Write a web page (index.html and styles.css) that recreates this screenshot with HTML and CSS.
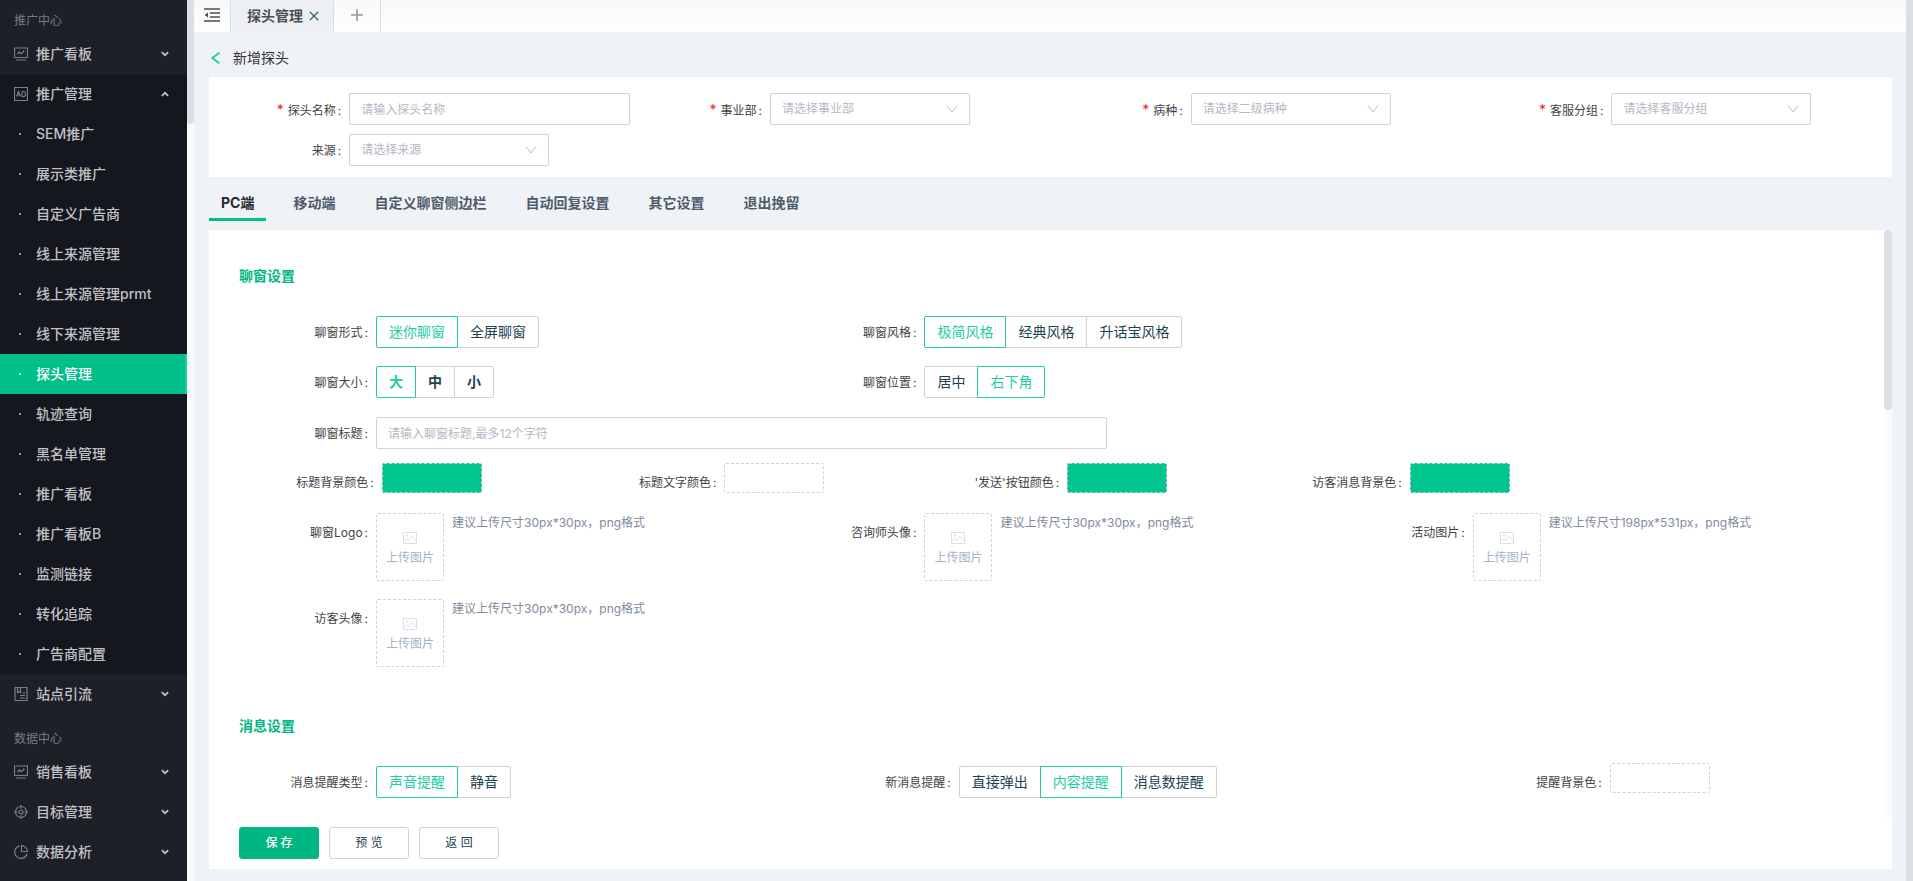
FILE: index.html
```html
<!DOCTYPE html>
<html lang="zh-CN">
<head>
<meta charset="utf-8">
<title>探头管理</title>
<link rel="stylesheet" href="styles.css">
</head>
<body>
<svg class="defs" aria-hidden="true">
  <symbol id="i-board" viewBox="0 0 14 14"><path d="M.5 1h13v9.5H.5zM2 13h10M3.5 7l2-2 1.5 1.7L10.500 4M9 4h1.500" /></symbol>
  <symbol id="i-ad" viewBox="0 0 14 14"><path d="M.5.5h13v13H.5zM2.500 9.500l2-5 2 5M3.200 8h2.600M8 4.500v5M8 4.500h1.200a2.500 2.500 0 0 1 0 5H8" /></symbol>
  <symbol id="i-site" viewBox="0 0 14 14"><path d="M1 .5h12v13H1zM3.500.5v5l1.500-1 1.500 1v-5M6 8.500h5M6 11h5M8.500 6h2.500" /></symbol>
  <symbol id="i-target" viewBox="0 0 14 14"><circle cx="7" cy="7" r="5.500"/><circle cx="7" cy="7" r="2"/><path d="M7 0v3.500M7 10.500V14M0 7h3.500M10.500 7H14" /></symbol>
  <symbol id="i-pie" viewBox="0 0 14 14"><path d="M5.500.9A6.300 6.300 0 1 0 13 9M7.500.6V6.500h5.900A6 6 0 0 0 7.500.6z" /></symbol>
  <symbol id="i-down" viewBox="0 0 8 6"><path d="M.8 1.200 4 4.200 7.200 1.200" /></symbol>
  <symbol id="i-up" viewBox="0 0 8 6"><path d="M.8 4.800 4 1.800 7.200 4.800" /></symbol>
  <symbol id="i-select" viewBox="0 0 12 12"><path d="M1 2.500 6 9l5-6.500" /></symbol>
  <symbol id="i-image" viewBox="0 0 14 12"><path d="M.5.5h13v11H.5zM1 9.500l3-3 1.500 2L9 4.500l4 4.500" /><circle cx="4" cy="3.500" r=".8"/></symbol>
</svg>
<div class="app">
  <nav class="sidebar">
    <div class="group-title first">推广中心</div>
    <a class="item" href="#"><svg class="icon"><use href="#i-board"/></svg>推广看板<svg class="arrow"><use href="#i-down"/></svg></a>
    <div class="opened">
      <a class="item" href="#"><svg class="icon"><use href="#i-ad"/></svg>推广管理<svg class="arrow"><use href="#i-up"/></svg></a>
      <a class="item sub" href="#">SEM推广</a>
      <a class="item sub" href="#">展示类推广</a>
      <a class="item sub" href="#">自定义广告商</a>
      <a class="item sub" href="#">线上来源管理</a>
      <a class="item sub" href="#">线上来源管理prmt</a>
      <a class="item sub" href="#">线下来源管理</a>
      <a class="item sub active" href="#">探头管理</a>
      <a class="item sub" href="#">轨迹查询</a>
      <a class="item sub" href="#">黑名单管理</a>
      <a class="item sub" href="#">推广看板</a>
      <a class="item sub" href="#">推广看板B</a>
      <a class="item sub" href="#">监测链接</a>
      <a class="item sub" href="#">转化追踪</a>
      <a class="item sub" href="#">广告商配置</a>
    </div>
    <a class="item" href="#"><svg class="icon"><use href="#i-site"/></svg>站点引流<svg class="arrow"><use href="#i-down"/></svg></a>
    <div class="group-title">数据中心</div>
    <a class="item" href="#"><svg class="icon"><use href="#i-board"/></svg>销售看板<svg class="arrow"><use href="#i-down"/></svg></a>
    <a class="item" href="#"><svg class="icon"><use href="#i-target"/></svg>目标管理<svg class="arrow"><use href="#i-down"/></svg></a>
    <a class="item" href="#"><svg class="icon"><use href="#i-pie"/></svg>数据分析<svg class="arrow"><use href="#i-down"/></svg></a>
  </nav>
  <div class="side-scroll"><div class="side-thumb"></div></div>

  <main class="main">
    <header class="topbar">
      <button class="fold" type="button" aria-label="收起菜单"><svg width="16" height="14" viewBox="0 0 16 14"><path d="M0 1h16M6 5h10M6 9h10M0 13h16" fill="none" stroke="#4a4f55" stroke-width="1.300"/><path d="M4 4.500v5L.5 7z" fill="#4a4f55"/></svg></button>
      <div class="page-tab">探头管理<button type="button" aria-label="关闭"><svg width="10" height="10" viewBox="0 0 10 10"><path d="M.8.8l8.400 8.400M9.200.8.8 9.200" fill="none" stroke="#3d6472" stroke-width="1.300"/></svg></button></div>
      <button class="add" type="button" aria-label="新增标签"><svg width="12" height="12" viewBox="0 0 12 12"><path d="M6 0v12M0 6h12" fill="none" stroke="#8c9bab" stroke-width="1.600"/></svg></button>
    </header>

    <div class="crumb">
      <button type="button" aria-label="返回上一页"><svg width="10" height="12" viewBox="0 0 10 12"><path d="M8.500.8 1.200 6l7.300 5.200" fill="none" stroke="#1fcca3" stroke-width="1.700"/></svg></button>
      <h1>新增探头</h1>
    </div>

    <form class="body">
      <section class="card base">
        <div class="field"><label class="req" for="f1">探头名称</label><input id="f1" class="text" type="text" placeholder="请输入探头名称"></div>
        <div class="field"><label class="req" for="f2">事业部</label><span class="select"><select id="f2"><option>请选择事业部</option></select><svg><use href="#i-select"/></svg></span></div>
        <div class="field"><label class="req" for="f3">病种</label><span class="select"><select id="f3"><option>请选择二级病种</option></select><svg><use href="#i-select"/></svg></span></div>
        <div class="field"><label class="req" for="f4">客服分组</label><span class="select"><select id="f4"><option>请选择客服分组</option></select><svg><use href="#i-select"/></svg></span></div>
        <div class="field"><label for="f5">来源</label><span class="select"><select id="f5"><option>请选择来源</option></select><svg><use href="#i-select"/></svg></span></div>
      </section>

      <div class="tabs" role="tablist">
        <button class="tab on" type="button" role="tab" aria-selected="true">PC端</button>
        <button class="tab" type="button" role="tab">移动端</button>
        <button class="tab" type="button" role="tab">自定义聊窗侧边栏</button>
        <button class="tab" type="button" role="tab">自动回复设置</button>
        <button class="tab" type="button" role="tab">其它设置</button>
        <button class="tab" type="button" role="tab">退出挽留</button>
      </div>

      <section class="card detail">
        <div class="scroller">
          <div class="content">
            <h2>聊窗设置</h2>
            <div class="row three">
              <div class="field"><span class="label" id="l1">聊窗形式</span><div class="radios" role="radiogroup" aria-labelledby="l1">
                <label><input type="radio" name="form" checked>迷你聊窗</label><label><input type="radio" name="form">全屏聊窗</label></div></div>
              <div class="field"><span class="label" id="l2">聊窗风格</span><div class="radios" role="radiogroup" aria-labelledby="l2">
                <label><input type="radio" name="style" checked>极简风格</label><label><input type="radio" name="style">经典风格</label><label><input type="radio" name="style">升话宝风格</label></div></div>
            </div>
            <div class="row three">
              <div class="field"><span class="label" id="l3">聊窗大小</span><div class="radios strong" role="radiogroup" aria-labelledby="l3">
                <label><input type="radio" name="size" checked>大</label><label><input type="radio" name="size">中</label><label><input type="radio" name="size">小</label></div></div>
              <div class="field"><span class="label" id="l4">聊窗位置</span><div class="radios" role="radiogroup" aria-labelledby="l4">
                <label><input type="radio" name="pos">居中</label><label><input type="radio" name="pos" checked>右下角</label></div></div>
            </div>
            <div class="row title-row">
              <div class="field"><label for="f6">聊窗标题</label><input id="f6" class="text" type="text" placeholder="请输入聊窗标题,最多12个字符"></div>
            </div>
            <div class="row colors">
              <div class="field"><span class="label">标题背景颜色</span><button class="swatch green" type="button" aria-label="标题背景颜色"></button></div>
              <div class="field"><span class="label">标题文字颜色</span><button class="swatch" type="button" aria-label="标题文字颜色"></button></div>
              <div class="field"><span class="label">'发送'按钮颜色</span><button class="swatch green" type="button" aria-label="发送按钮颜色"></button></div>
              <div class="field"><span class="label">访客消息背景色</span><button class="swatch green" type="button" aria-label="访客消息背景色"></button></div>
            </div>
            <div class="row three uploads">
              <div class="field"><span class="label">聊窗Logo</span><button class="upload" type="button"><svg><use href="#i-image"/></svg>上传图片</button><span class="hint">建议上传尺寸30px*30px，png格式</span></div>
              <div class="field"><span class="label">咨询师头像</span><button class="upload" type="button"><svg><use href="#i-image"/></svg>上传图片</button><span class="hint">建议上传尺寸30px*30px，png格式</span></div>
              <div class="field"><span class="label">活动图片</span><button class="upload" type="button"><svg><use href="#i-image"/></svg>上传图片</button><span class="hint">建议上传尺寸198px*531px，png格式</span></div>
              <div class="field"><span class="label">访客头像</span><button class="upload" type="button"><svg><use href="#i-image"/></svg>上传图片</button><span class="hint">建议上传尺寸30px*30px，png格式</span></div>
            </div>
            <h2 class="next">消息设置</h2>
            <div class="row three message">
              <div class="field"><span class="label" id="l5">消息提醒类型</span><div class="radios" role="radiogroup" aria-labelledby="l5">
                <label><input type="radio" name="sound" checked>声音提醒</label><label><input type="radio" name="sound">静音</label></div></div>
              <div class="field wide"><span class="label" id="l6">新消息提醒</span><div class="radios" role="radiogroup" aria-labelledby="l6">
                <label><input type="radio" name="notice">直接弹出</label><label><input type="radio" name="notice" checked>内容提醒</label><label><input type="radio" name="notice">消息数提醒</label></div></div>
              <div class="field half"><span class="label">提醒背景色</span><button class="swatch" type="button" aria-label="提醒背景色"></button></div>
            </div>
          </div>
          <div class="bar"><div class="bar-thumb"></div></div>
        </div>
        <div class="actions">
          <button class="btn primary" type="submit">保 存</button>
          <button class="btn" type="button">预 览</button>
          <button class="btn" type="button">返 回</button>
        </div>
      </section>
    </form>
  </main>
  <div class="page-scroll"></div>
</div>
</body>
</html>
```
FILE: styles.css
```css
* { box-sizing: border-box; }

body {
  margin: 0;
  font-family: Inter, "Noto Sans CJK SC", sans-serif;
  font-size: 12px;
  line-height: 20px;
  color: #3f4247;
  background: #eff2f7;
}

button, input, select { font: inherit; color: inherit; margin: 0; }
button { padding: 0; border: 0; background: none; cursor: pointer; }
h1, h2 { margin: 0; }
svg { flex: none; }
.defs { position: absolute; width: 0; height: 0; }

.app { display: flex; height: 100vh; overflow: hidden; }

/* Sidebar */
.sidebar { flex: none; width: 187px; background: #1e2028; overflow: hidden; }
.group-title { padding: 15px 14px 3px; color: #747b83; }
.group-title.first { padding-top: 11px; }
.opened { background: #15171e; }
.item {
  display: flex;
  align-items: center;
  gap: 8px;
  height: 40px;
  padding: 0 18px 0 14px;
  color: #c0c1c4;
  font-size: 14px;
  font-weight: 500;
  text-decoration: none;
}
.item .icon { width: 14px; height: 14px; fill: none; stroke: #74808a; stroke-width: 1.2; }
.item .arrow { width: 8px; height: 6px; margin-left: auto; fill: none; stroke: #c0c1c4; stroke-width: 1.8; }
.item.sub::before {
  content: "";
  width: 2px;
  height: 2px;
  margin: 0 7px 0 5px;
  border-radius: 1px;
  background: currentColor;
}
.item.active { color: #fff; background: #00bf8a; border-right: 2px solid #1fcca3; }
.side-scroll { flex: none; width: 7px; background: #fafafa; }
.side-thumb { height: 124px; border-radius: 0 0 4px 4px; background: #dcdfe4; }
.page-scroll { flex: none; width: 7px; background: #dcdfe4; }

/* Top bar */
.main { flex: 1; min-width: 0; display: flex; flex-direction: column; }
.topbar { display: flex; flex: none; height: 32px; background: linear-gradient(#f8f8f8, #fff); }
.topbar > * { display: flex; align-items: center; justify-content: center; padding-bottom: 2px; border-right: 1px solid #dcdfe4; }
.fold { width: 37px; }
.page-tab { gap: 6px; padding: 0 14px 0 16px; font-size: 14px; font-weight: 700; background: #eceff4; color: #4a4f55; }
.page-tab button { display: flex; }
.add { width: 47px; }

.crumb { display: flex; align-items: center; gap: 12px; flex: none; height: 45px; padding: 7px 17px 0; }
.crumb button { display: flex; }
.crumb h1 { font-size: 14px; font-weight: 400; color: #333; }

.body { flex: 1; min-height: 0; display: flex; flex-direction: column; padding: 0 14px 12px 15px; }
.card { background: #fff; }

/* Form fields */
.field { display: flex; min-width: 0; }
.field > label, .label {
  flex: none;
  padding-right: 8px;
  line-height: 34px;
  height: 32px;
  text-align: right;
  white-space: nowrap;
}
.field > label::after, .label::after { content: ":"; margin-left: 2px; }
.req::before { content: "*"; margin-right: 4px; color: #f5222d; font-size: 14px; }

.text, .select select {
  height: 32px;
  padding: 0 11px;
  border: 1px solid #d0d2d5;
  border-radius: 2px;
  background: #fff;
  outline: 0;
}
.text::placeholder { color: #b3b8c4; opacity: 1; }
.select { position: relative; width: 200px; }
.select select { width: 100%; appearance: none; color: #b3b8c4; }
.select svg { position: absolute; right: 12px; top: 10px; width: 12px; height: 12px; fill: none; stroke: #bfc1c5; pointer-events: none; }

.base { display: grid; grid-template-columns: repeat(4, 1fr); row-gap: 9px; padding: 16px 0 11px; flex: none; }
.base .field > label { width: 33.33%; }
.base .text { width: 66.66%; }

.tabs { display: flex; flex: none; gap: 15px; height: 53px; }
.tab { height: 44px; padding: 11px 12px 0; font-size: 14px; font-weight: 700; color: #4f5b6b; border-bottom: 3px solid transparent; }
.tab.on { color: #26292e; border-color: #00bf8a; }

/* Detail panel */
.detail { flex: 1; min-height: 0; display: flex; flex-direction: column; }
.scroller { flex: 1; min-height: 0; display: flex; padding-left: 30px; }
.content { flex: 1; min-width: 0; overflow: hidden; padding-top: 35px; }
.bar { flex: none; width: 8px; background: #fafafa; }
.bar-thumb { height: 180px; border-radius: 4px; background: #dcdfe4; }

h2 { font-size: 14px; line-height: 22px; font-weight: 700; color: #00b781; }
h2 + .row { margin-top: 29px; }
h2.next { margin-top: 48px; }
.row { display: grid; margin-top: 18px; }
.three { grid-template-columns: repeat(3, 1fr); row-gap: 18px; }
.three .label { width: 25%; }
.title-row { grid-template-columns: 2fr 1fr; margin-top: 19px; }
.title-row .field > label { width: 12.5%; }
.title-row .text { width: 66.66%; }
.colors { grid-template-columns: repeat(4, 1fr); width: 83.33%; height: 30px; margin-top: 14px; }
.colors .label { width: 41.66%; padding-top: 3px; }
.uploads { margin-top: 20px; }
.uploads .label { padding-top: 3px; }
.message .wide .label { width: 31.25%; }
.message .half .label { width: 50%; }
.message .swatch { margin-top: -3px; }

.radios { display: flex; height: 32px; font-size: 14px; color: #1d4250; }
.radios label {
  position: relative;
  padding: 0 12px;
  line-height: 30px;
  border: 1px solid #d0d2d5;
  background: #fff;
  cursor: pointer;
}
.radios label + label { margin-left: -1px; }
.radios label:first-child { border-radius: 2px 0 0 2px; }
.radios label:last-child { border-radius: 0 2px 2px 0; }
.radios label:has(input:checked) { z-index: 1; color: #1fcca3; border-color: #1fcca3; }
.radios input { position: absolute; opacity: 0; width: 0; height: 0; margin: 0; }
.strong { font-weight: 700; }

.swatch { width: 100px; height: 30px; border: 1px dashed #d0d2d5; border-radius: 2px; }
.swatch.green { background: #00c58e; }

.upload {
  display: flex;
  flex-direction: column;
  align-items: center;
  justify-content: center;
  gap: 4px;
  flex: none;
  width: 68px;
  height: 68px;
  padding-top: 6px;
  border: 1px dashed #d0d2d5;
  border-radius: 2px;
  color: #a3b3c9;
}
.upload svg { width: 14px; height: 12px; fill: none; stroke: #dcdfe8; }
.hint { margin-left: 8px; color: #7f8b9c; white-space: nowrap; }

.actions { display: flex; flex: none; gap: 10px; padding: 10px 30px; }
.btn { width: 80px; height: 32px; border: 1px solid #d0d2d5; border-radius: 3px; background: #fff; color: #1d4250; }
.btn.primary { background: #00b781; border-color: #00b781; color: #fff; font-weight: 500; }
```
